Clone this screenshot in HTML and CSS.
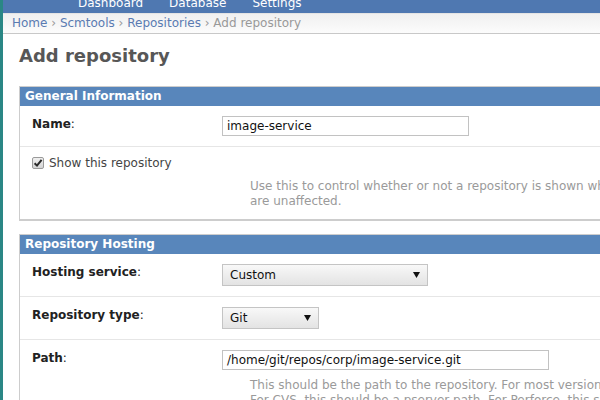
FILE: index.html
```html
<!DOCTYPE html>
<html lang="en">
<head>
<meta charset="utf-8">
<title>Add repository</title>
<link rel="stylesheet" href="styles.css">
</head>
<body>
<div class="page">
  <nav class="topnav">
    <ul>
      <li>Dashboard</li>
      <li>Database</li>
      <li>Settings</li>
    </ul>
  </nav>
  <div class="crumbs">
    <a class="crumb">Home</a><span class="sep"> › </span><a class="crumb">Scmtools</a><span class="sep"> › </span><a class="crumb">Repositories</a><span class="sep"> › </span><span class="current">Add repository</span>
  </div>
  <main class="content">
    <h1 class="title">Add repository</h1>

    <section class="panel">
      <h2 class="panel-head">General Information</h2>
      <div class="row">
        <div class="label"><b>Name</b>:</div>
        <div class="field"><div class="textbox wide-1">image-service</div></div>
      </div>
      <div class="row row-check">
        <div class="check-line">
          <span class="checkbox"><svg width="10" height="10" viewBox="0 0 10 10"><path d="M1.6 5.2 L4 7.6 L8.6 1.8" fill="none" stroke="#2a2a2a" stroke-width="2"/></svg></span>
          <span class="check-text">Show this repository</span>
        </div>
        <p class="help">Use this to control whether or not a repository is shown when creating new review requests. Existing review requests<br>are unaffected.</p>
      </div>
    </section>

    <section class="panel">
      <h2 class="panel-head">Repository Hosting</h2>
      <div class="row">
        <div class="label"><b>Hosting service</b>:</div>
        <div class="field"><div class="select sel-hosting"><span>Custom</span><svg width="7" height="6" viewBox="0 0 7 6"><path d="M0 0 H7 L3.5 6 Z" fill="#111"/></svg></div></div>
      </div>
      <div class="row">
        <div class="label"><b>Repository type</b>:</div>
        <div class="field"><div class="select sel-type"><span>Git</span><svg width="7" height="6" viewBox="0 0 7 6"><path d="M0 0 H7 L3.5 6 Z" fill="#111"/></svg></div></div>
      </div>
      <div class="row row-path">
        <div class="label"><b>Path</b>:</div>
        <div class="field">
          <div class="textbox wide-2">/home/git/repos/corp/image-service.git</div>
          <p class="help help-path">This should be the path to the repository. For most version control systems, this will be a URI of some form or another.<br>For CVS, this should be a pserver path. For Perforce, this should be a port name. For Bazaar, this should be a URL.</p>
        </div>
      </div>
    </section>
  </main>
</div>
</body>
</html>
```
FILE: styles.css
```css
html, body {
  margin: 0;
  height: 100%;
  overflow: hidden;
  background: #fff;
}
body {
  font-family: "DejaVu Sans", Verdana, sans-serif;
  font-size: 12px;
  color: #222;
}
.page {
  border-left: 3px solid #2a8785;
  min-height: 400px;
  width: 800px;
}
.topnav {
  height: 13px;
  background: #4f78b1;
  overflow: hidden;
}
.topnav ul {
  display: flex;
  gap: 26px;
  margin: -4px 0 0 75px;
  padding: 0;
  list-style: none;
  line-height: 14px;
  color: #fff;
}
.crumbs {
  height: 19px;
  line-height: 19px;
  padding-left: 9px;
  background: linear-gradient(#f0f0f0, #fcfcfc);
  border-top: 1px solid #e4e4e4;
  border-bottom: 1px solid #c8c8c8;
  white-space: nowrap;
}
.crumb { color: #5a7bb2; }
.sep { color: #999; }
.current { color: #999; }
.content {
  padding: 11px 0 0 16px;
}
.title {
  margin: 0;
  font-size: 18px;
  line-height: 21px;
  font-weight: bold;
  color: #575757;
}
.panel {
  margin-top: 20px;
  width: 700px;
  border: 1px solid #cdcdcd;
  border-bottom-width: 2px;
}
.panel + .panel {
  margin-top: 13px;
}
.panel-head {
  margin: 0;
  height: 19px;
  line-height: 19px;
  padding-left: 5px;
  background: #5886bb;
  color: #fff;
  font-size: 12px;
  font-weight: bold;
}
.row {
  display: flex;
  padding: 10px 12px;
  border-top: 1px solid #e6e6e6;
}
.panel-head + .row {
  border-top: none;
}
.label {
  width: 190px;
  flex: none;
  line-height: 16px;
  color: #222;
}
.label b { font-weight: bold; }
.field {
  flex: 1;
}
.textbox {
  box-sizing: border-box;
  height: 20px;
  line-height: 18px;
  border: 1px solid #c2c2c2;
  padding: 0 4px;
  background: #fff;
  color: #111;
  white-space: nowrap;
}
.wide-1 { width: 247px; }
.wide-2 { width: 327px; }
.select {
  box-sizing: border-box;
  height: 22px;
  display: flex;
  align-items: center;
  justify-content: space-between;
  padding: 0 7px;
  border: 1px solid #c4c4c4;
  background: linear-gradient(#f8f8f8, #e3e3e3);
  color: #111;
}
.sel-hosting { width: 206px; }
.sel-type { width: 97px; }
.row-check {
  display: block;
  padding: 8px 12px 10px;
}
.check-line {
  display: flex;
  align-items: center;
  gap: 5px;
  line-height: 16px;
}
.checkbox {
  box-sizing: border-box;
  width: 12px;
  height: 12px;
  border: 1px solid #9a9a9a;
  border-radius: 2px;
  background: linear-gradient(#f0f0f0, #d4d4d4);
  display: flex;
  align-items: center;
  justify-content: center;
}
.check-text { color: #444; }
.help {
  margin: 8px 0 0 218px;
  line-height: 15px;
  color: #9a9a9a;
  white-space: nowrap;
}
.help-path {
  margin: 8px 0 0 28px;
}
```
